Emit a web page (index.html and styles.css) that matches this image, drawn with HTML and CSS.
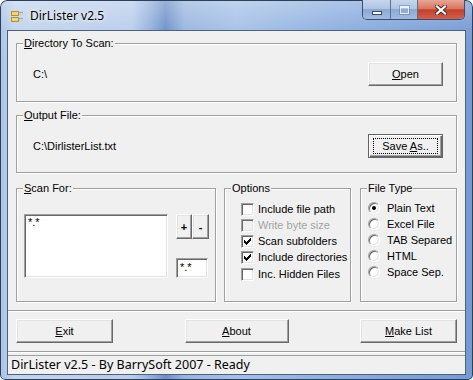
FILE: index.html
```html
<!DOCTYPE html>
<html lang="en">
<head>
    <meta charset="UTF-8">
    <title>DirLister v2.5</title>
    <link rel="stylesheet" href="styles.css">
</head>
<body>
    <div class="window">
        <div class="titlebar">
            <svg class="app-icon" width="14" height="14" viewBox="0 0 14 14">
                <rect x="1.5" y="2.5" width="7" height="4" fill="#f1d57c" stroke="#b88f2e"/>
                <rect x="1.5" y="8.5" width="7" height="4" fill="#f1d57c" stroke="#b88f2e"/>
                <rect x="9" y="3" width="4" height="1" fill="#9aa4b0"/>
                <rect x="9" y="5" width="4" height="1" fill="#c3cad2"/>
                <rect x="9" y="9" width="4" height="1" fill="#9aa4b0"/>
                <rect x="9" y="11" width="4" height="1" fill="#c3cad2"/>
            </svg>
            <span class="title">DirLister v2.5</span>
            <div class="caption-buttons">
                <span class="cap-btn cap-min"><i></i></span>
                <span class="cap-btn cap-max"><i></i></span>
                <span class="cap-btn cap-close">
                    <svg width="12" height="10" viewBox="0 0 12 10">
                        <path d="M2 1.5L10 8.5M10 1.5L2 8.5" stroke="#4a2620" stroke-width="4" stroke-linecap="square"/>
                        <path d="M2 1.5L10 8.5M10 1.5L2 8.5" stroke="#fff" stroke-width="2.2" stroke-linecap="square"/>
                    </svg>
                </span>
            </div>
        </div>

        <div class="client">
            <div class="group group-dir">
                <div class="group-title"><u>D</u>irectory To Scan:</div>
                <div class="group-body">
                    <span>C:\</span>
                    <button class="btn btn-wide"><u>O</u>pen</button>
                </div>
            </div>

            <div class="group group-out">
                <div class="group-title"><u>O</u>utput File:</div>
                <div class="group-body">
                    <span>C:\DirlisterList.txt</span>
                    <button class="btn btn-wide btn-default"><span class="focus">Save <u>A</u>s..</span></button>
                </div>
            </div>

            <div class="lower">
                <div class="group group-scan">
                    <div class="group-title"><u>S</u>can For:</div>
                    <div class="scan-body">
                        <div class="sunken listbox">*.*</div>
                        <div class="scan-side">
                            <div class="pm">
                                <button class="btn btn-small">+</button>
                                <button class="btn btn-small">-</button>
                            </div>
                            <div class="sunken mask">*.*</div>
                        </div>
                    </div>
                </div>

                <div class="group group-opts">
                    <div class="group-title">Options</div>
                    <ul class="opts">
                        <li><span class="check"></span>Include file path</li>
                        <li class="disabled"><span class="check"></span>Write byte size</li>
                        <li><span class="check"><svg width="11" height="11" viewBox="0 0 11 11"><path d="M2 4h1v1h1v1h1v-1h1v-1h1v-1h1v-1h1v3h-1v1h-1v1h-1v1h-1v1h-1v-1h-1v-1h-1z" fill="#000"/></svg></span>Scan subfolders</li>
                        <li><span class="check"><svg width="11" height="11" viewBox="0 0 11 11"><path d="M2 4h1v1h1v1h1v-1h1v-1h1v-1h1v-1h1v3h-1v1h-1v1h-1v1h-1v1h-1v-1h-1v-1h-1z" fill="#000"/></svg></span>Include directories</li>
                        <li class="last"><span class="check"></span>Inc. Hidden Files</li>
                    </ul>
                </div>

                <div class="group group-type">
                    <div class="group-title">File Type</div>
                    <ul class="types">
                        <li><span class="radio on"></span>Plain Text</li>
                        <li><span class="radio"></span>Excel File</li>
                        <li><span class="radio"></span>TAB Separed</li>
                        <li><span class="radio"></span>HTML</li>
                        <li><span class="radio"></span>Space Sep.</li>
                    </ul>
                </div>
            </div>

            <div class="button-bar">
                <button class="btn btn-exit"><u>E</u>xit</button>
                <button class="btn btn-about"><u>A</u>bout</button>
                <button class="btn btn-exit"><u>M</u>ake List</button>
            </div>

            <div class="status">DirLister v2.5 - By BarrySoft 2007 - Ready</div>
        </div>
    </div>
</body>
</html>
```

FILE: styles.css
```css
body {
    margin: 0;
    background: #fff;
    font-family: "Liberation Sans", Arial, sans-serif;
    font-size: 11px;
    color: #000;
}
.window {
    width: 473px;
    height: 380px;
    box-sizing: border-box;
    padding: 0 7px 5px;
    display: flex;
    flex-direction: column;
    border-radius: 7px 7px 5px 5px;
    overflow: hidden;
    box-shadow: inset 0 0 0 1px #2e3f5a;
    background:
        linear-gradient(180deg, rgba(255,255,255,0.3) 0, rgba(255,255,255,0.05) 30px, rgba(255,255,255,0) 60px),
        linear-gradient(90deg, #a9c3e6 0, #c0d5ee 3%, #b8cdeb 28%, #90aedb 32%, #6d8fc6 35%, #98b5e0 39%, #a5c0e6 50%, #8badde 72%, #7699d2 100%);
}
.titlebar {
    height: 30px;
    margin: 0 -7px;
    padding: 0 8px 0 10px;
    display: flex;
    align-items: center;
}
.app-icon {
    margin-top: 1px;
}
.title {
    margin-left: 6px;
    margin-top: 1px;
    font-family: "Noto Sans", "Open Sans", sans-serif;
    font-size: 12px;
    color: #000;
    text-shadow: 0 0 6px rgba(255,255,255,0.9), 0 0 3px rgba(255,255,255,0.8);
}
.caption-buttons {
    margin-left: auto;
    align-self: flex-start;
    display: flex;
    height: 19px;
    border: 1px solid #3b4f6f;
    border-top: none;
    border-radius: 0 0 5px 5px;
    overflow: hidden;
}
.cap-btn {
    display: flex;
    align-items: center;
    justify-content: center;
    background: linear-gradient(180deg, #c6d6ec 0, #b0c5e3 45%, #8ea9d2 50%, #a2bce0 100%);
}
.cap-min {
    width: 27px;
    border-right: 1px solid #5a6f92;
}
.cap-min i {
    display: block;
    width: 8px;
    height: 2px;
    margin-top: 6px;
    background: #fff;
    border: 1px solid #3a4a63;
}
.cap-max {
    width: 26px;
    border-right: 1px solid #5a6f92;
}
.cap-max i {
    display: block;
    width: 7px;
    height: 5px;
    border: 1px solid rgba(255,255,255,0.75);
    border-top-width: 2px;
    box-shadow: 0 0 0 1px rgba(70,90,120,0.35);
}
.cap-close {
    width: 46px;
    background: linear-gradient(180deg, #e8a596 0, #d9765f 45%, #c2402a 52%, #d0614d 100%);
}
.client {
    flex: 1;
    display: flex;
    flex-direction: column;
    background: #f0f0f0;
    border: 1px solid #4f6079;
}
.group {
    box-sizing: border-box;
    border: 1px solid #a0a0a0;
    box-shadow: inset 1px 1px #fff, 1px 1px #fff;
}
.group-title {
    width: max-content;
    height: 13px;
    line-height: 13px;
    margin: -7px 0 0 6px;
    padding: 0 1px;
    background: #f0f0f0;
}
.group-dir {
    margin: 12px 8px 0;
    height: 59px;
}
.group-out {
    margin: 13px 8px 0;
    height: 58px;
}
.group-body {
    display: flex;
    align-items: center;
    justify-content: space-between;
    padding: 12px 13px 0 16px;
}
.btn {
    box-sizing: border-box;
    margin: 0;
    padding: 0;
    font-family: inherit;
    font-size: 11px;
    color: #000;
    background: #f0f0f0;
    border: 1px solid;
    border-color: #fff #696969 #696969 #fff;
    box-shadow: inset -1px -1px #a0a0a0, inset 1px 1px #e3e3e3;
    display: flex;
    align-items: center;
    justify-content: center;
}
.btn-wide {
    width: 75px;
    height: 24px;
}
.btn-default {
    border-color: #646464;
    box-shadow: inset 1px 1px #fff, inset -1px -1px #696969, inset -2px -2px #a0a0a0;
}
.focus {
    display: block;
    width: 65px;
    height: 16px;
    box-sizing: border-box;
    border: 1px dotted #000;
    text-align: center;
    line-height: 14px;
}
.lower {
    display: flex;
    margin: 15px 8px 0;
    height: 114px;
}
.group-scan {
    width: 200px;
}
.group-opts {
    width: 127px;
    margin-left: 8px;
}
.group-type {
    width: 97px;
    margin-left: 9px;
}
.scan-body {
    display: flex;
    gap: 8px;
    padding: 19px 0 0 7px;
}
.sunken {
    box-sizing: border-box;
    background: #fff;
    border: 1px solid;
    border-color: #a0a0a0 #fff #fff #a0a0a0;
    box-shadow: inset 1px 1px #696969, inset -1px -1px #e3e3e3;
    padding: 1px 3px;
    line-height: 13px;
}
.listbox {
    width: 144px;
    height: 64px;
}
.scan-side {
    display: flex;
    flex-direction: column;
    justify-content: space-between;
}
.pm {
    display: flex;
}
.btn-small {
    width: 16px;
    height: 25px;
    font-weight: bold;
}
.btn-small + .btn-small {
    width: 17px;
}
.mask {
    width: 32px;
    height: 20px;
    padding-top: 2px;
}
ul {
    list-style: none;
    margin: 0;
}
.opts {
    padding: 6px 0 0 16px;
}
.types {
    padding: 5px 0 0 7px;
}
li {
    height: 16px;
    display: flex;
    align-items: center;
}
.opts li .check {
    margin-right: 4px;
}
.opts li.last {
    margin-top: 1px;
}
.check {
    flex: none;
    width: 13px;
    height: 13px;
    box-sizing: border-box;
    background: #fff;
    border: 1px solid;
    border-color: #a0a0a0 #fff #fff #a0a0a0;
    box-shadow: inset 1px 1px #696969, inset -1px -1px #e3e3e3;
}
.check svg {
    display: block;
}
.disabled {
    color: #a3a3a3;
}
.disabled .check {
    background: #f0f0f0;
}
.radio {
    flex: none;
    position: relative;
    width: 12px;
    height: 12px;
    margin-right: 7px;
    box-sizing: border-box;
    border-radius: 50%;
    background: #fff;
    border: 1px solid;
    border-color: #a0a0a0 #fff #fff #a0a0a0;
    box-shadow: inset 1px 1px #696969, inset -1px -1px #e3e3e3;
}
.radio.on::after {
    content: "";
    position: absolute;
    left: 3px;
    top: 3px;
    width: 4px;
    height: 4px;
    border-radius: 50%;
    background: #000;
}
.button-bar {
    margin-top: 8px;
    height: 42px;
    box-sizing: border-box;
    padding: 8px 8px 0;
    display: flex;
    align-items: flex-start;
    justify-content: space-between;
    border-top: 1px solid #a0a0a0;
    border-bottom: 1px solid #a0a0a0;
    box-shadow: inset 0 1px #fff, 0 1px #fff;
}
.btn-exit {
    width: 97px;
    height: 24px;
}
.btn-about {
    width: 104px;
    height: 24px;
}
.status {
    margin-top: 3px;
    flex: 1;
    box-sizing: border-box;
    padding: 0 0 0 3px;
    border-top: 1px solid #a0a0a0;
    font-family: "Noto Sans", "Open Sans", sans-serif;
    font-size: 12.5px;
    line-height: 17px;
}
```
